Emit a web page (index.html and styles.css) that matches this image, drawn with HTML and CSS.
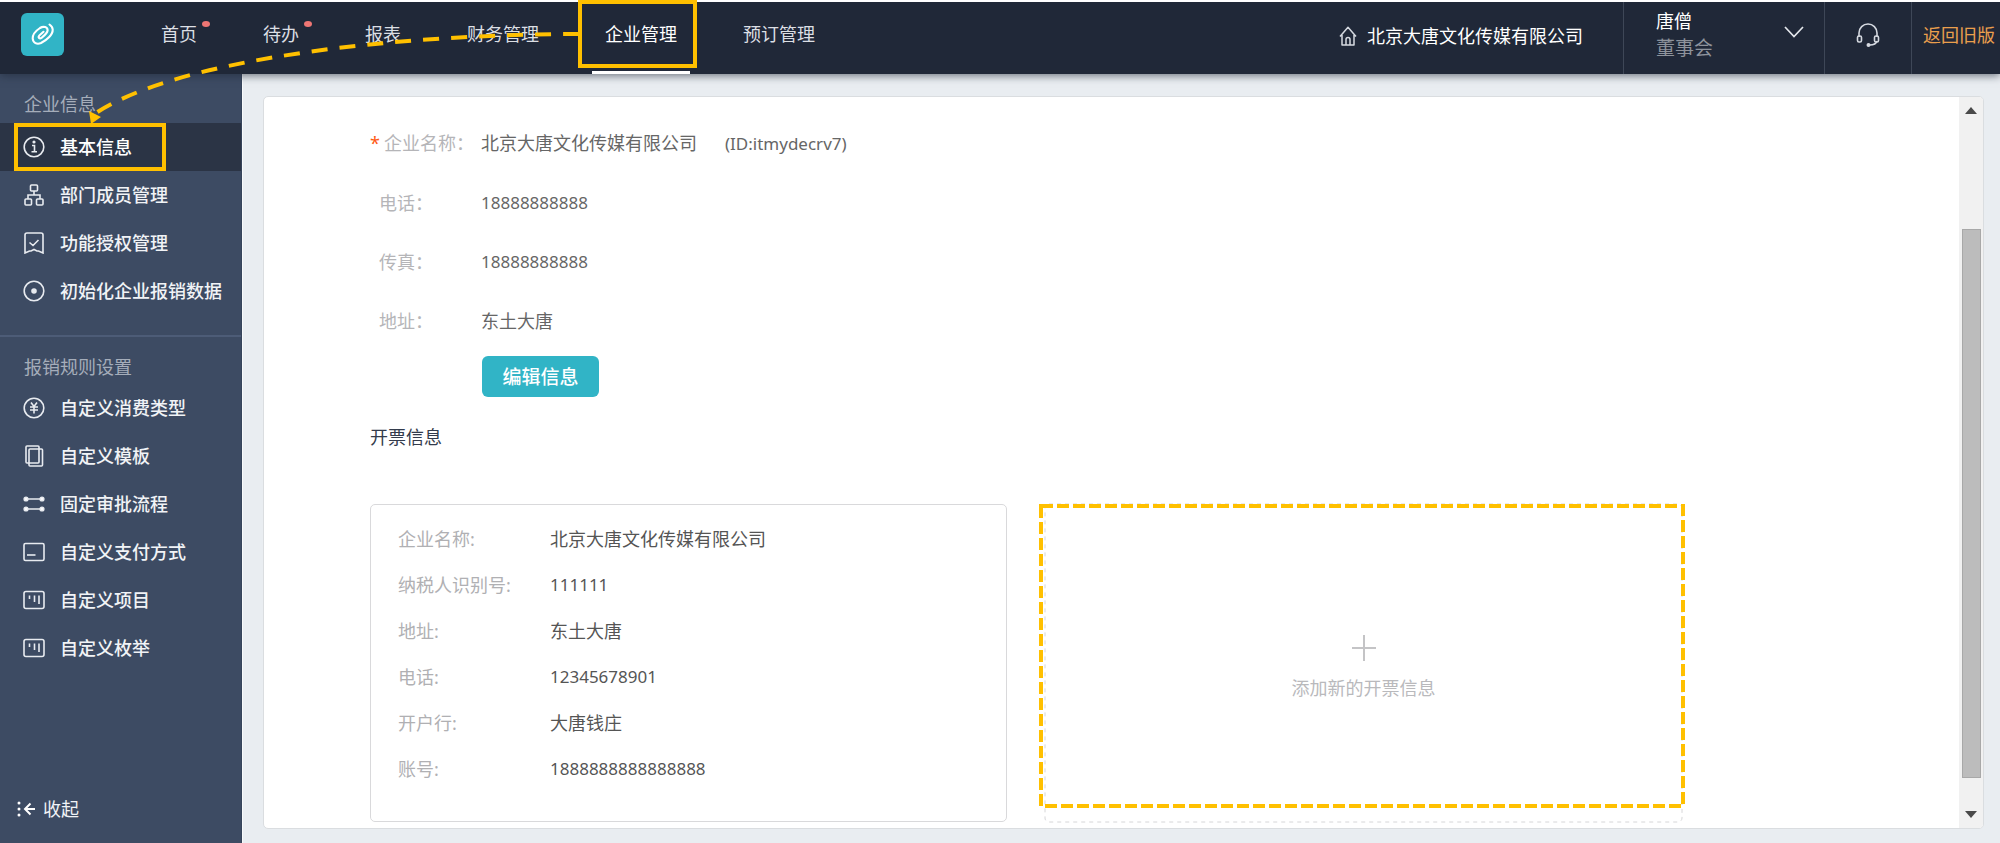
FILE: index.html
```html
<!DOCTYPE html>
<html lang="zh-CN">
<head>
<meta charset="utf-8">
<title>企业管理</title>
<link rel="stylesheet" href="styles.css">
</head>
<body>
<div class="page">
  <header class="header">
    <a class="logo" href="#" aria-label="首页">
      <svg width="43" height="43" viewBox="0 0 43 43" fill="none" stroke="#fff" stroke-width="2.100" stroke-linecap="round"><path d="M22.500 18.800L18.600 22.300C16.500 24.500 18.500 26.300 20.800 24.600C23.500 22.500 26.300 20 26.600 17.500C26.800 14 22.500 12.800 19 15C14.500 18 11.500 21.500 11.700 25.500C12 30 16 31.800 20 30C26 27 32 21.500 31.700 16.500C31.500 14 30 12.500 28.500 11.500"/></svg>
    </a>
    <nav class="topnav">
      <a class="topnav-link" href="#">首页<i class="dot"></i></a>
      <a class="topnav-link" href="#">待办<i class="dot"></i></a>
      <a class="topnav-link" href="#">报表</a>
      <a class="topnav-link" href="#">财务管理</a>
      <a class="topnav-link topnav-current" href="#">企业管理<i class="mark mark-top"></i></a>
      <a class="topnav-link" href="#">预订管理</a>
    </nav>
    <a class="company" href="#">
      <svg width="18" height="20" viewBox="0 0 18 20" fill="none" stroke="#d5d9e0" stroke-width="1.500" stroke-linejoin="round"><path d="M1 10.500L9 1.200L17 10.500M3 9V19H15V9M7 19V13.500Q7 11.500 9 11.500T11 13.500V19"/></svg>
      北京大唐文化传媒有限公司
    </a>
    <button class="user" type="button">
      <span class="user-text"><span>唐僧</span><span class="user-role">董事会</span></span>
      <svg width="20" height="12" viewBox="0 0 20 12" fill="none" stroke="#e4e7ec" stroke-width="1.700"><path d="M1 1L10 10.500L19 1"/></svg>
    </button>
    <button class="support" type="button" aria-label="客服">
      <svg width="24" height="24" viewBox="0 0 24 24" fill="none" stroke="#d5d9e0" stroke-width="1.600"><path d="M3 14V10A9 9 0 0 1 21 10V14M21 18Q20 22 13.500 22"/><rect x="1.500" y="13" width="4" height="6" rx="1.500"/><rect x="18.500" y="13" width="4" height="6" rx="1.500"/><circle cx="12.500" cy="22" r="1.200" fill="#d5d9e0"/></svg>
    </button>
    <a class="legacy" href="#">返回旧版</a>
  </header>

  <aside class="sidebar">
    <h2 class="side-title">企业信息</h2>
    <ul class="side-list">
      <li><a class="side-link side-current" href="#"><svg class="icon" viewBox="0 0 22 22"><circle cx="11" cy="11" r="9.800"/><path d="M9 9.500H11.500V15.500M8.500 15.700H14"/><circle cx="11" cy="6" r=".8" fill="#e8ebf0"/></svg>基本信息<i class="mark mark-side"></i></a></li>
      <li><a class="side-link" href="#"><svg class="icon" viewBox="0 0 22 22"><rect x="7.500" y="1" width="7" height="6" rx="1"/><rect x="2" y="15" width="6.500" height="6" rx="1"/><rect x="13.500" y="15" width="6.500" height="6" rx="1"/><path d="M11 7V11M5 15V11H17V15"/></svg>部门成员管理</a></li>
      <li><a class="side-link" href="#"><svg class="icon" viewBox="0 0 22 22"><path d="M2 21V3Q2 1 4 1H18Q20 1 20 3V21L15.500 19H14L11 17.500L8 19H6.500ZM6.500 10.500L10 13.500L15.500 8"/></svg>功能授权管理</a></li>
      <li><a class="side-link" href="#"><svg class="icon" viewBox="0 0 22 22"><circle cx="11" cy="11" r="9.800"/><circle cx="11" cy="11" r="2" fill="#e8ebf0"/></svg>初始化企业报销数据</a></li>
    </ul>
    <h2 class="side-title side-title-second">报销规则设置</h2>
    <ul class="side-list">
      <li><a class="side-link" href="#"><svg class="icon" viewBox="0 0 22 22"><circle cx="11" cy="11" r="9.800"/><path d="M8 5.500L11 9.500L14 5.500M7 10H15M7 13H15M11 9.500V16.500"/></svg>自定义消费类型</a></li>
      <li><a class="side-link" href="#"><svg class="icon" viewBox="0 0 22 22"><rect x="3" y="1" width="13" height="17" rx="1"/><rect x="6" y="4" width="13.500" height="17" rx="1"/></svg>自定义模板</a></li>
      <li><a class="side-link" href="#"><svg class="icon" viewBox="0 0 22 22"><path d="M3 6H19M3 16H19"/><g fill="#fff"><circle cx="3" cy="6" r="1.800"/><circle cx="19" cy="6" r="1.800"/><circle cx="3" cy="16" r="1.800"/><circle cx="19" cy="16" r="1.800"/></g></svg>固定审批流程</a></li>
      <li><a class="side-link" href="#"><svg class="icon" viewBox="0 0 22 22"><rect x="1" y="2.500" width="20" height="17" rx="1.500"/><path d="M4 14H12.500"/></svg>自定义支付方式</a></li>
      <li><a class="side-link" href="#"><svg class="icon" viewBox="0 0 22 22"><rect x="1" y="2.500" width="20" height="17" rx="2"/><path d="M6.500 6.500V10M11.500 6.500V13M16 6.500V15"/></svg>自定义项目</a></li>
      <li><a class="side-link" href="#"><svg class="icon" viewBox="0 0 22 22"><rect x="1" y="2.500" width="20" height="17" rx="2"/><path d="M6.500 6.500V10M11.500 6.500V13M16 6.500V15"/></svg>自定义枚举</a></li>
    </ul>
    <button class="collapse" type="button">
      <svg width="19" height="16" viewBox="0 0 19 16" fill="none" stroke="#fff" stroke-width="2"><path d="M18 8H9M13.500 2.500L8 8L13.500 13.500"/><g fill="#fff" stroke="none"><circle cx="2" cy="2" r="1.500"/><circle cx="2" cy="8" r="1.500"/><circle cx="2" cy="14" r="1.500"/></g></svg>
      收起
    </button>
  </aside>

  <main class="main">
    <div class="panel">
      <div class="content">
        <dl class="info">
          <dt><span class="required">*</span>企业名称：</dt>
          <dd>北京大唐文化传媒有限公司<span class="num company-id">(ID:itmydecrv7)</span></dd>
          <dt class="optional">电话：</dt><dd class="num">18888888888</dd>
          <dt class="optional">传真：</dt><dd class="num">18888888888</dd>
          <dt class="optional">地址：</dt><dd>东土大唐</dd>
        </dl>
        <button class="edit" type="button">编辑信息</button>
        <h1 class="heading">开票信息</h1>
        <div class="cards">
          <dl class="card">
            <dt>企业名称:</dt><dd>北京大唐文化传媒有限公司</dd>
            <dt>纳税人识别号:</dt><dd class="num">111111</dd>
            <dt>地址:</dt><dd>东土大唐</dd>
            <dt>电话:</dt><dd class="num">12345678901</dd>
            <dt>开户行:</dt><dd>大唐钱庄</dd>
            <dt>账号:</dt><dd class="num">1888888888888888</dd>
          </dl>
          <button class="add" type="button">
            <svg class="add-edge" width="100%" height="100%"><rect width="100%" height="100%" rx="4"/></svg>
            <svg class="add-mark"><rect width="100%" height="100%"/></svg>
            <svg width="24" height="26" viewBox="0 0 24 26" stroke="#c4c4c6" stroke-width="2"><path d="M12 0V26M0 13H24"/></svg>
            <span>添加新的开票信息</span>
          </button>
        </div>
      </div>
      <div class="scroll" aria-hidden="true">
        <svg width="12" height="7" viewBox="0 0 12 7" fill="#4a4a4a"><path d="M0 7L6 0L12 7Z"/></svg>
        <div class="track"><div class="thumb"></div></div>
        <svg width="12" height="7" viewBox="0 0 12 7" fill="#4a4a4a"><path d="M0 0L6 7L12 0Z"/></svg>
      </div>
    </div>
  </main>
  <svg class="arrow" width="580" height="125" viewBox="0 0 580 125" aria-hidden="true"><path d="M579 34C400 34 180 58 96 113" fill="none" stroke="#ffc000" stroke-width="4" stroke-dasharray="16 12"/><path d="M89 111L101 117L91 124Z" fill="#ffc000"/></svg>
</div>
</body>
</html>
```
FILE: styles.css
```css
* { box-sizing: border-box; }

body {
  margin: 0;
  background: #e9edf1;
  color: #666;
  font-family: "Noto Sans", "Noto Sans CJK SC", sans-serif;
  font-size: 18px;
  line-height: 24px;
}

a { color: inherit; text-decoration: none; }
button { border: 0; padding: 0; background: none; color: inherit; font: inherit; cursor: pointer; }
ul, dl, dd { margin: 0; padding: 0; list-style: none; }
svg { flex: none; }

.page {
  position: relative;
  display: grid;
  grid-template: 74px 1fr / 242px minmax(0, 1fr);
  min-height: 100vh;
}

/* top bar */
.header {
  position: relative;
  z-index: 1;
  grid-column: 1 / -1;
  display: flex;
  border-top: 2px solid #fff;
  background: #202838;
  color: #fff;
  box-shadow: 0 2px 8px rgba(32, 40, 56, 0.6);
  white-space: nowrap;
}
.logo {
  width: 43px;
  height: 43px;
  margin: 11px 84px 0 21px;
  border-radius: 6px;
  background: #31b4c6;
}
.topnav { display: flex; gap: 40px; flex: 1; color: #dcdfe4; }
.topnav-link { position: relative; padding: 20px 13px 0; }
.topnav-current { border-bottom: 3px solid #fff; color: #fff; }
.dot {
  position: absolute;
  top: 19px;
  right: 0;
  width: 8px;
  height: 6px;
  border-radius: 50%;
  background: #ee7674;
}
.mark { position: absolute; border: 4px solid #ffc000; }
.mark-top { inset: -2px -7px 3px -14px; }
.mark-side { inset: 0 75px 0 14px; }
.company { display: flex; align-items: center; gap: 10px; padding: 0 40px 5px 0; }
.user {
  display: flex;
  align-items: center;
  justify-content: space-between;
  width: 201px;
  padding: 0 20px 6px 32px;
  border-left: 1px solid #3e4757;
  text-align: left;
  line-height: 27px;
}
.user svg { margin-bottom: 6px; }
.user-text { display: flex; flex-direction: column; }
.user-role { color: #8e939c; font-size: 19px; }
.support { width: 87px; padding-bottom: 6px; border-left: 1px solid #3e4757; }
.support svg { display: block; margin: auto; }
.legacy { width: 89px; padding: 21px 0 0 11px; border-left: 1px solid #3e4757; color: #ea9f4d; }

/* side menu */
.sidebar {
  display: flex;
  flex-direction: column;
  border-right: 1px solid #36445b;
  background: #3d4b63;
  color: #f1f3f6;
}
.side-title {
  margin: 0;
  padding: 18px 24px 7px;
  color: #a5adba;
  font-size: 18px;
  font-weight: 400;
}
.side-title-second { margin-top: 20px; padding-bottom: 5px; border-top: 2px solid #4d5c77; }
.side-link {
  position: relative;
  display: flex;
  align-items: center;
  gap: 15px;
  height: 48px;
  padding: 0 0 1px 23px;
  font-weight: 500;
}
.side-current { background: #2b3445; color: #fff; }
.icon { width: 22px; height: 22px; fill: none; stroke: #e8ebf0; stroke-width: 1.6; }
.collapse {
  display: flex;
  align-items: center;
  gap: 7px;
  margin-top: auto;
  padding: 0 0 22px 17px;
}

/* content */
.main { display: flex; padding: 22px 16px 14px 20px; border-left: 1px solid #f8fafb; }
.panel {
  display: flex;
  flex: 1;
  overflow: hidden;
  border: 1px solid #dadde0;
  border-radius: 5px;
  background: #fff;
}
.content { flex: 1; max-width: 1418px; padding: 17px 0 6px 106px; }
.info { display: grid; grid-template-columns: 111px 1fr; }
.info dt, .info dd { padding: 17px 0 18px; }
.info dt { color: #b5b5b8; white-space: nowrap; }
.info .optional { padding-left: 9px; }
.required { margin-right: 4px; color: #ff5a14; }
.num { font-size: 17px; }
.company-id { margin-left: 28px; }
.edit {
  display: block;
  width: 117px;
  height: 41px;
  margin: 5px 0 0 112px;
  border-radius: 6px;
  background: #31b4c6;
  color: #fff;
  font-size: 19px;
  font-weight: 500;
}
.heading { margin: 28px 0 55px; color: #333b4c; font-size: 18px; font-weight: 400; }
.cards { display: grid; grid-template-columns: 1fr 1fr; gap: 38px; }
.card {
  display: grid;
  grid-template-columns: 152px 1fr;
  padding: 11px 27px 29px;
  border: 1px solid #d9d9db;
  border-radius: 5px;
}
.card dt, .card dd { padding: 11px 0; }
.card dt { color: #b0b0b3; }
.card dd { color: #555; }
.add {
  position: relative;
  display: flex;
  flex-direction: column;
  align-items: center;
  justify-content: center;
  gap: 15px;
  padding-top: 8px;
  color: #b9b9bc;
}
.add-edge, .add-mark { position: absolute; overflow: visible; fill: none; }
.add-edge { inset: 0; stroke: #d6d6d8; stroke-dasharray: 4 4; }
.add-mark {
  top: 2px;
  left: -4px;
  width: calc(100% + 5px);
  height: calc(100% - 18px);
  stroke: #ffc000;
  stroke-width: 4;
  stroke-dasharray: 12 4;
}

/* scroll bar */
.scroll {
  display: flex;
  flex-direction: column;
  align-items: center;
  width: 24px;
  margin-left: auto;
  padding: 10px 0;
  background: #f1f1f1;
}
.track { display: flex; flex: 1; flex-direction: column; padding: 115px 0 33px; }
.thumb { flex: 1; width: 19px; border: 1px solid #a8a8a8; background: #bcbcbc; }

.arrow { position: absolute; z-index: 2; top: 0; left: 0; pointer-events: none; }
```
